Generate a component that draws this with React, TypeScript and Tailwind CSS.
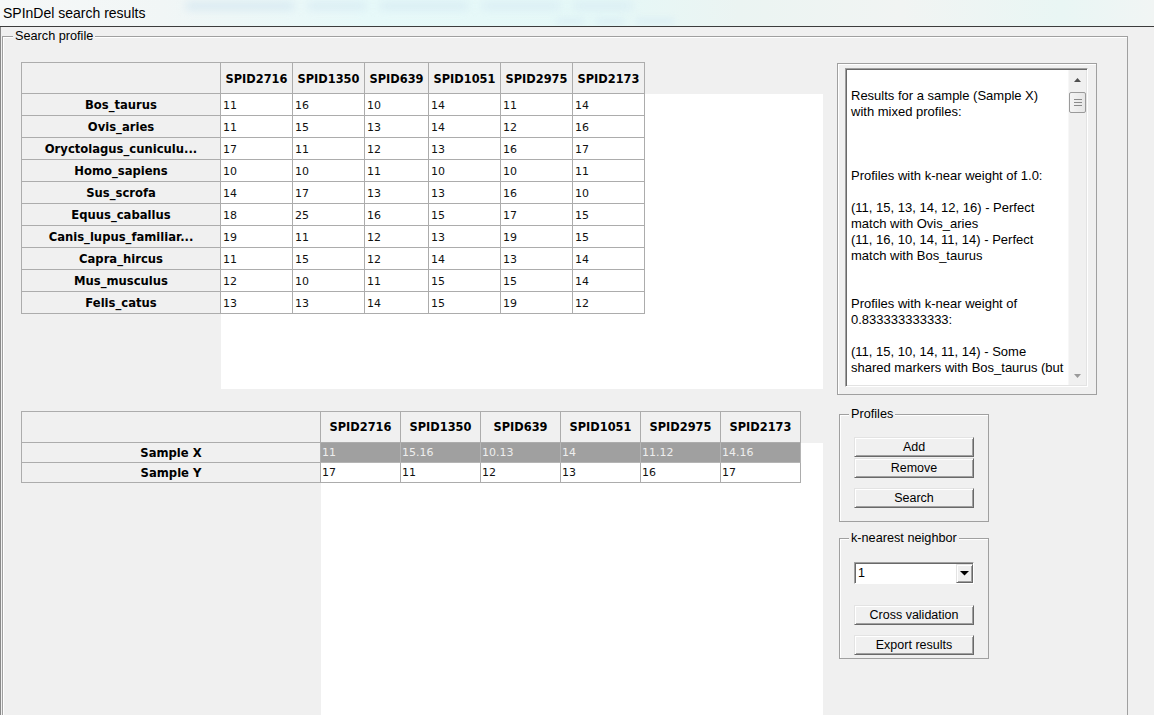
import React from 'react';

const topCols = [
  { name: 'SPID2716', w: 'w-[72px]' },
  { name: 'SPID1350', w: 'w-[72px]' },
  { name: 'SPID639', w: 'w-[64px]' },
  { name: 'SPID1051', w: 'w-[72px]' },
  { name: 'SPID2975', w: 'w-[72px]' },
  { name: 'SPID2173', w: 'w-[72px]' },
];

const topRows: [string, string[]][] = [
  ['Bos_taurus', ['11', '16', '10', '14', '11', '14']],
  ['Ovis_aries', ['11', '15', '13', '14', '12', '16']],
  ['Oryctolagus_cuniculu...', ['17', '11', '12', '13', '16', '17']],
  ['Homo_sapiens', ['10', '10', '11', '10', '10', '11']],
  ['Sus_scrofa', ['14', '17', '13', '13', '16', '10']],
  ['Equus_caballus', ['18', '25', '16', '15', '17', '15']],
  ['Canis_lupus_familiar...', ['19', '11', '12', '13', '19', '15']],
  ['Capra_hircus', ['11', '15', '12', '14', '13', '14']],
  ['Mus_musculus', ['12', '10', '11', '15', '15', '14']],
  ['Felis_catus', ['13', '13', '14', '15', '19', '12']],
];

const bottomCols = ['SPID2716', 'SPID1350', 'SPID639', 'SPID1051', 'SPID2975', 'SPID2173'];

const bottomRows: { name: string; vals: string[]; selected: boolean }[] = [
  { name: 'Sample X', vals: ['11', '15.16', '10.13', '14', '11.12', '14.16'], selected: true },
  { name: 'Sample Y', vals: ['17', '11', '12', '13', '16', '17'], selected: false },
];

const textLines = [
  '',
  'Results for a sample (Sample X)',
  'with mixed profiles:',
  '',
  '',
  '',
  'Profiles with k-near weight of 1.0:',
  '',
  '(11, 15, 13, 14, 12, 16) - Perfect',
  'match with Ovis_aries',
  '(11, 16, 10, 14, 11, 14) - Perfect',
  'match with Bos_taurus',
  '',
  '',
  'Profiles with k-near weight of',
  '0.833333333333:',
  '',
  '(11, 15, 10, 14, 11, 14) - Some',
  'shared markers with Bos_taurus (but',
];

function TopTable() {
  return (
    <div className="w-[802px] h-[327px] flex flex-col font-['DejaVu_Sans',sans-serif] text-[11px] text-black">
      <div className="flex h-[32px] shrink-0">
        <div className="w-[200px] border border-[#acacac] bg-[#f0f0f0]" />
        {topCols.map((c) => (
          <div
            key={c.name}
            className={`${c.w} border-t border-r border-b border-[#acacac] bg-[#f0f0f0] flex items-center justify-center pt-[4px] font-bold text-[11.4px] whitespace-nowrap`}
          >
            {c.name}
          </div>
        ))}
      </div>
      <div className="flex flex-1 min-h-0">
        <div className="w-[200px] flex flex-col shrink-0">
          {topRows.map(([n]) => (
            <div
              key={n}
              className="h-[22px] border-l border-r border-b border-[#acacac] bg-[#f0f0f0] flex items-center justify-center pt-[3px] font-bold text-[11.6px] whitespace-nowrap"
            >
              {n}
            </div>
          ))}
        </div>
        <div className="flex-1 bg-white flex flex-col">
          {topRows.map(([n, vals]) => (
            <div key={n} className="flex h-[22px]">
              {vals.map((v, i) => (
                <div
                  key={i}
                  className={`${topCols[i].w} border-r border-b border-[#acacac] flex items-center pl-[2px] pt-[3px] text-[#111]`}
                >
                  {v}
                </div>
              ))}
            </div>
          ))}
        </div>
      </div>
    </div>
  );
}

function BottomTable() {
  return (
    <div className="w-[802px] h-[310px] flex flex-col font-['DejaVu_Sans',sans-serif] text-[11px] text-black">
      <div className="flex h-[32px] shrink-0">
        <div className="w-[300px] border border-[#acacac] bg-[#f0f0f0]" />
        {bottomCols.map((c) => (
          <div
            key={c}
            className="w-[80px] border-t border-r border-b border-[#acacac] bg-[#f0f0f0] flex items-center justify-center pt-[2px] font-bold text-[11.4px] whitespace-nowrap"
          >
            {c}
          </div>
        ))}
      </div>
      <div className="flex flex-1 min-h-0">
        <div className="w-[300px] flex flex-col shrink-0">
          {bottomRows.map((r) => (
            <div
              key={r.name}
              className="h-[20px] border-l border-r border-b border-[#acacac] bg-[#f0f0f0] flex items-center justify-center pt-[2px] font-bold text-[11.6px]"
            >
              {r.name}
            </div>
          ))}
        </div>
        <div className="flex-1 bg-white flex flex-col">
          {bottomRows.map((r) => (
            <div key={r.name} className="flex h-[20px]">
              {r.vals.map((v, i) => (
                <div
                  key={i}
                  className={
                    r.selected
                      ? 'w-[80px] border-r border-b border-[#b4b4b4] bg-[#a0a0a0] text-[#eeeeee] flex items-center pl-px pt-[2px]'
                      : 'w-[80px] border-r border-b border-[#acacac] text-[#111] flex items-center pl-px pt-[2px]'
                  }
                >
                  {v}
                </div>
              ))}
            </div>
          ))}
        </div>
      </div>
    </div>
  );
}

function Btn({ children, className = '' }: { children: React.ReactNode; className?: string }) {
  return (
    <button
      type="button"
      className={`w-[120px] h-[20px] flex items-center justify-center bg-[#f0f0f0] border border-t-[#e3e3e3] border-l-[#e3e3e3] border-r-[#696969] border-b-[#696969] shadow-[inset_1px_1px_0_#ffffff,inset_-1px_-1px_0_#a0a0a0] text-[12.5px] leading-none text-black ${className}`}
    >
      {children}
    </button>
  );
}

function ScrollBar() {
  return (
    <div className="w-[18px] h-full flex flex-col bg-[#f0f0f0] border-l border-[#f7f7f7]">
      <div className="h-[17px] flex items-center justify-center pt-[2px]">
        <svg width="7" height="4" viewBox="0 0 7 4">
          <polygon points="3.5,0 7,4 0,4" fill="#505050" />
        </svg>
      </div>
      <div className="mt-[5px] h-[21px] rounded-[2px] border border-[#9a9a9a] bg-[linear-gradient(90deg,#f4f4f4,#e6e6e6)] flex flex-col items-center justify-center gap-[2px]">
        <div className="w-[8px] h-px bg-[#8a8a8a]" />
        <div className="w-[8px] h-px bg-[#8a8a8a]" />
        <div className="w-[8px] h-px bg-[#8a8a8a]" />
      </div>
      <div className="flex-1" />
      <div className="h-[17px] flex items-center justify-center pb-[1px]">
        <svg width="7" height="4" viewBox="0 0 7 4">
          <polygon points="0,0 7,0 3.5,4" fill="#9a9a9a" />
        </svg>
      </div>
    </div>
  );
}

function TextFrame() {
  return (
    <div className="w-[260px] h-[332px] border border-[#a0a0a0] shadow-[inset_1px_1px_0_#ffffff] pl-[7px] pt-[4px] pr-[8px] pb-[7px]">
      <div className="w-[243px] h-[319px] bg-white border border-t-[#a0a0a0] border-l-[#a0a0a0] border-r-white border-b-white shadow-[inset_1px_1px_0_#696969,inset_-1px_-1px_0_#e3e3e3] p-px flex">
        <div className="flex-1 min-w-0 overflow-hidden pl-[4px] pt-[2px] text-[13px] leading-[16px] text-black">
          {textLines.map((l, i) => (
            <div key={i} className="h-[16px] whitespace-pre">
              {l}
            </div>
          ))}
        </div>
        <ScrollBar />
      </div>
    </div>
  );
}

function Combo() {
  return (
    <div className="w-[120px] h-[22px] bg-white border border-t-[#a0a0a0] border-l-[#a0a0a0] border-r-white border-b-white shadow-[inset_1px_1px_0_#696969] pt-px pl-px flex">
      <div className="flex-1 flex items-center pl-[2px] text-[12.5px] text-black">1</div>
      <div className="w-[17px] h-full bg-[#f0f0f0] border border-t-[#e3e3e3] border-l-[#e3e3e3] border-r-[#696969] border-b-[#696969] shadow-[inset_1px_1px_0_#ffffff,inset_-1px_-1px_0_#a0a0a0] flex items-center justify-center">
        <svg width="9" height="5" viewBox="0 0 9 5">
          <polygon points="0,0 9,0 4.5,4.5" fill="#000000" />
        </svg>
      </div>
    </div>
  );
}

export default function App() {
  return (
    <div className="w-[1154px] h-[715px] overflow-hidden bg-[#f0f0f0] flex flex-col font-['Liberation_Sans',Arial,sans-serif] text-black">
      <div className="h-[26px] shrink-0 flex items-start overflow-hidden bg-[linear-gradient(90deg,#f6f8f8_0%,#f1f6f6_14%,#e7f9f9_32%,#e5f8f7_52%,#ebf4f2_64%,#f1f4f3_78%,#e9f6f4_92%,#f1f5f4_100%)]">
        <span className="pl-[3px] text-[14px] leading-[26px] whitespace-nowrap text-black">SPInDel search results</span>
        <div className="ml-[40px] pt-[2px] flex flex-col gap-[8px] opacity-70">
          <div className="flex gap-[12px]">
            <div className="w-[110px] h-[8px] rounded bg-[#cfe4f0] blur-[4px]" />
            <div className="w-[60px] h-[8px] rounded bg-[#d3e8f2] blur-[4px]" />
            <div className="w-[90px] h-[8px] rounded bg-[#d3e8f2] blur-[4px]" />
            <div className="w-[80px] h-[8px] rounded bg-[#d6eaf3] blur-[4px]" />
            <div className="w-[60px] h-[8px] rounded bg-[#d6eaf3] blur-[4px]" />
          </div>
          <div className="flex gap-[10px] ml-[370px]">
            <div className="w-[30px] h-[6px] rounded bg-[#d8ecf4] blur-[3px]" />
            <div className="w-[30px] h-[6px] rounded bg-[#d8ecf4] blur-[3px]" />
            <div className="w-[40px] h-[6px] rounded bg-[#d8ecf4] blur-[3px]" />
          </div>
        </div>
      </div>
      <div className="h-px shrink-0 bg-[#3c3c3c]" />
      <div className="flex-1 min-h-0 flex border-l border-[#8a8a8a] pl-px pt-[2px]">
        <fieldset className="w-[1126px] h-[720px] shrink-0 border border-[#a0a0a0] shadow-[inset_1px_1px_0_#ffffff]">
          <legend className="ml-[10px] px-[2px] text-[12.7px] leading-[15px] bg-[#f0f0f0]">Search profile</legend>
          <div className="flex pl-[18px] pt-[18px]">
            <div className="w-[802px] shrink-0 flex flex-col">
              <TopTable />
              <div className="mt-[22px]">
                <BottomTable />
              </div>
            </div>
            <div className="ml-[14px] w-[260px] shrink-0 flex flex-col pt-px">
              <TextFrame />
              <fieldset className="ml-[2px] mt-[12px] w-[150px] border border-[#a0a0a0] shadow-[inset_1px_1px_0_#ffffff]">
                <legend className="ml-[9px] px-[2px] text-[12.7px] leading-[15px] bg-[#f0f0f0]">Profiles</legend>
                <div className="pl-[14px] pt-[15px] pb-[13px] flex flex-col">
                  <Btn>Add</Btn>
                  <Btn className="mt-px">Remove</Btn>
                  <Btn className="mt-[10px]">Search</Btn>
                </div>
              </fieldset>
              <fieldset className="ml-[2px] mt-[9px] w-[150px] border border-[#a0a0a0] shadow-[inset_1px_1px_0_#ffffff]">
                <legend className="ml-[9px] px-[2px] text-[12.7px] leading-[15px] bg-[#f0f0f0]">k-nearest neighbor</legend>
                <div className="pl-[14px] pt-[16px] pb-[3px] flex flex-col">
                  <Combo />
                  <Btn className="mt-[21px]">Cross validation</Btn>
                  <Btn className="mt-[10px]">Export results</Btn>
                </div>
              </fieldset>
            </div>
          </div>
        </fieldset>
      </div>
    </div>
  );
}
